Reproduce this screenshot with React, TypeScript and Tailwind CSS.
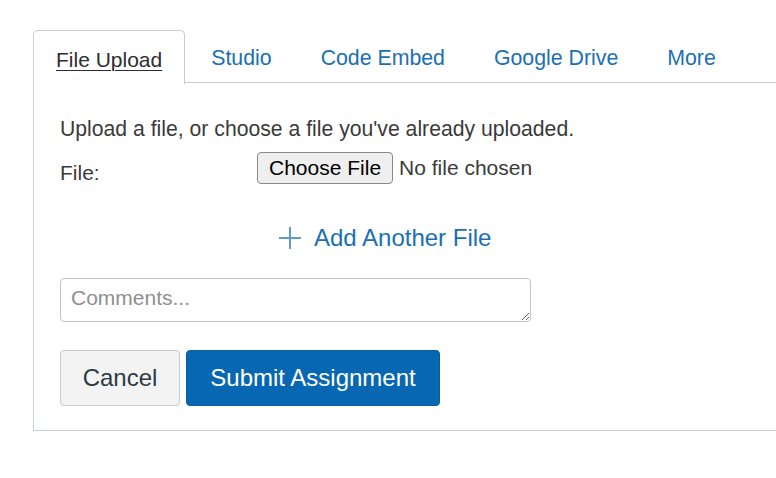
import React from "react";

const tabs = ["Studio", "Code Embed", "Google Drive", "More"];

export default function App() {
  return (
    <div
      className="w-[776px] h-[478px] overflow-hidden bg-white"
      style={{ fontFamily: '"Liberation Sans", Arial, sans-serif' }}
    >
      <div className="ml-[33px] mt-[30px] w-[800px]">
        <div className="flex h-[53px] gap-[3px] border-b border-[#c7cdd1]">
          <div className="mb-[-1px] flex h-[54px] items-center rounded-t-[5px] border border-b-0 border-[#c7cdd1] bg-white px-[22px] pt-[4px]">
            <span className="text-[21px] leading-[24px] text-[#2d2d2d] underline underline-offset-[3px] decoration-1">
              File Upload
            </span>
          </div>
          {tabs.map((t) => (
            <div key={t} className="flex items-center border border-transparent px-[22px] pt-[4px]">
              <span className="text-[21.3px] leading-[24px] text-[#1b70b2]">{t}</span>
            </div>
          ))}
        </div>
        <div className="border-b border-l border-[#c7cdd1] px-[26px] pb-[24px] pt-[34px]">
          <p className="text-[21.2px] leading-[24px] text-[#3a3a3a]">
            Upload a file, or choose a file you've already uploaded.
          </p>
          <div className="mt-[11px] flex items-start">
            <span className="mt-[9px] w-[197px] text-[21px] leading-[24px] text-[#3a3a3a]">File:</span>
            <div className="flex items-center">
              <button className="h-[32px] rounded-[4px] border border-[#8a8a8a] bg-[#efefef] px-[11px] text-[21px] leading-[24px] text-black">
                Choose File
              </button>
              <span className="ml-[6px] text-[21px] leading-[24px] text-[#3a3a3a]">No file chosen</span>
            </div>
          </div>
          <div className="ml-[218px] mt-[39px] flex h-[28px] items-center">
            <svg width="24" height="24" viewBox="0 0 24 24" className="shrink-0">
              <path d="M12 1 V23 M1 12 H23" stroke="#5b9bd1" strokeWidth="2" fill="none" />
            </svg>
            <span className="ml-[12px] text-[24px] leading-[28px] text-[#1b70b2]">Add Another File</span>
          </div>
          <textarea
            placeholder="Comments..."
            className="mt-[26px] block h-[44px] w-[471px] rounded-[4px] border border-[#c2c2c2] px-[10px] py-[6px] text-[21px] leading-[26px] text-[#333] placeholder:text-[#8f8f8f] outline-none"
            style={{ fontFamily: '"Liberation Sans", Arial, sans-serif' }}
          />
          <div className="mt-[28px] flex gap-[6px]">
            <button className="h-[56px] w-[120px] rounded-[4px] border border-[#c7cdd1] bg-[#f3f3f3] text-[24px] text-[#2d3b45]">
              Cancel
            </button>
            <button className="h-[56px] w-[254px] rounded-[4px] border border-[#0a5c9e] bg-[#0867b2] text-[24px] text-white">
              Submit Assignment
            </button>
          </div>
        </div>
      </div>
    </div>
  );
}
